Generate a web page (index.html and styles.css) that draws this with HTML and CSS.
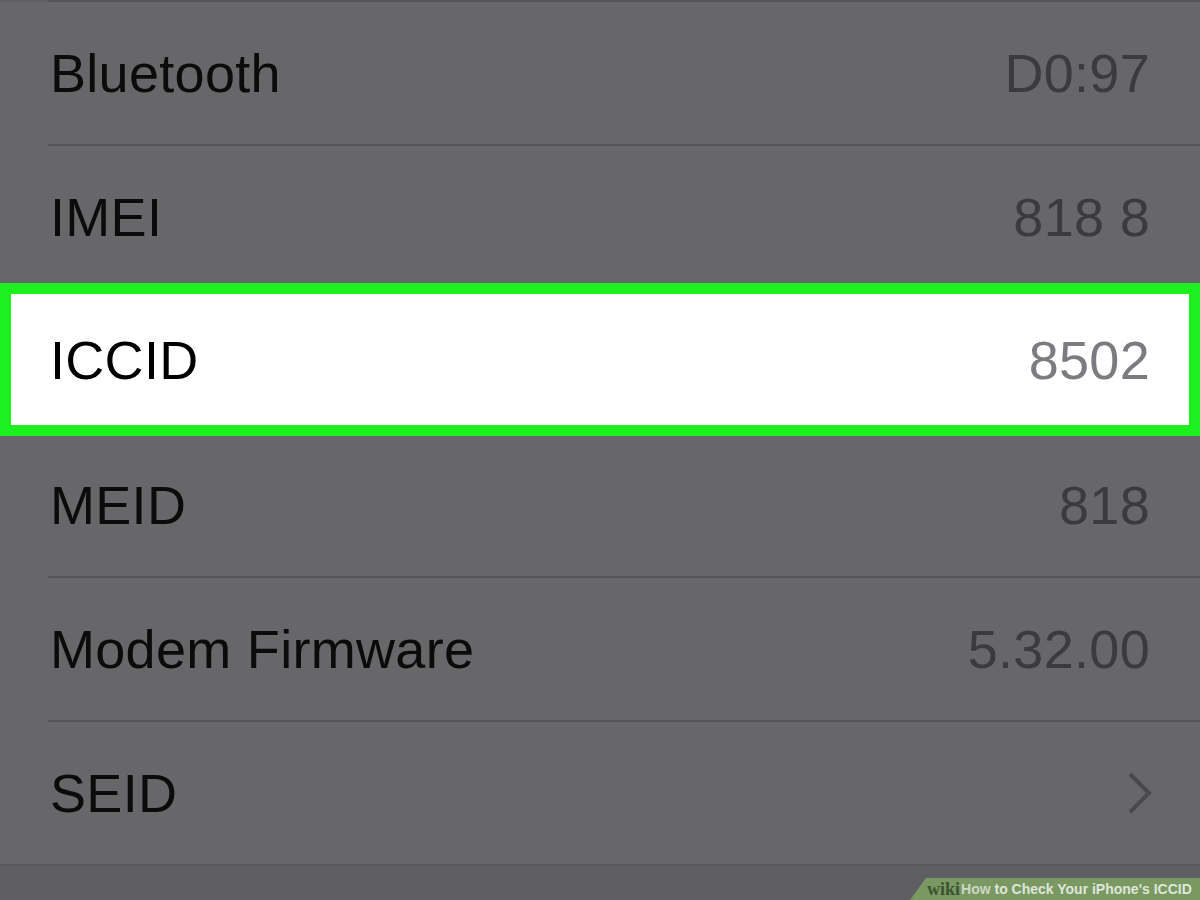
FILE: index.html
```html
<!DOCTYPE html>
<html lang="en">
<head>
<meta charset="utf-8">
<title>How to Check Your iPhone's ICCID</title>
<link rel="stylesheet" href="styles.css">
</head>
<body>
<div class="screen">
  <div class="top-rule"></div>
  <ul class="settings">
    <li class="row"><span class="label">Bluetooth</span><span class="value">D0:97</span></li>
    <li class="row"><span class="label">IMEI</span><span class="value">818 8</span></li>
    <li class="row highlight"><span class="label">ICCID</span><span class="value">8502</span></li>
    <li class="row"><span class="label">MEID</span><span class="value">818</span></li>
    <li class="row"><span class="label">Modem Firmware</span><span class="value">5.32.00</span></li>
    <li class="row last"><span class="label">SEID</span>
      <svg class="chevron" width="26" height="44" viewBox="0 0 26 44" aria-hidden="true">
        <polyline points="3,3 22,22 3,41" fill="none" stroke="#4a494d" stroke-width="4" stroke-linecap="butt" stroke-linejoin="miter"/>
      </svg>
    </li>
  </ul>
  <div class="watermark"><span class="wiki">wiki</span><span class="how">How</span><span class="title"> to Check Your iPhone's ICCID</span></div>
</div>
</body>
</html>
```
FILE: styles.css
```css
* { box-sizing: border-box; }

html, body {
  margin: 0;
  padding: 0;
}

body {
  width: 1200px;
  height: 900px;
  overflow: hidden;
  background: #5f5e62;
  font-family: "Liberation Sans", Arial, sans-serif;
}

.screen {
  position: relative;
  width: 1200px;
  height: 900px;
}

.top-rule {
  margin-left: 48px;
  height: 2px;
  background: #575659;
}

.settings {
  list-style: none;
  margin: 0;
  padding: 0;
  background: #676669;
}

.row {
  display: flex;
  align-items: center;
  justify-content: space-between;
  height: 144px;
  margin-left: 48px;
  padding: 0 50px 0 2px;
  border-bottom: 2px solid #575659;
  font-size: 54px;
  letter-spacing: 0.3px;
}

.label {
  color: #0b0b0c;
}

.value {
  color: #3b3b3d;
}

.row.highlight {
  position: relative;
  margin: -7px 0 -2px 0;
  height: 153px;
  padding: 0 39px;
  border: 11px solid #1df01f;
  background: #ffffff;
}

.row.highlight .label {
  color: #000000;
}

.row.highlight .value {
  color: #7c7c80;
}

.row.last {
  margin-left: 0;
  padding-left: 50px;
  padding-right: 47px;
}

.chevron {
  display: block;
}

.watermark {
  position: absolute;
  right: 0;
  bottom: 0;
  width: 290px;
  height: 22px;
  padding-left: 17px;
  display: flex;
  align-items: center;
  background: #7a9962;
  clip-path: polygon(16px 0, 100% 0, 100% 100%, 0 100%);
  font-family: "Liberation Sans", Arial, sans-serif;
  font-weight: bold;
  font-size: 14px;
  white-space: nowrap;
}

.watermark .wiki {
  font-family: "Liberation Serif", "Times New Roman", serif;
  font-size: 18px;
  color: #3a5231;
}

.watermark .how {
  margin-left: 1px;
  color: #cdd6c6;
}

.watermark .title {
  color: #dfe5da;
  white-space: pre;
}
```
